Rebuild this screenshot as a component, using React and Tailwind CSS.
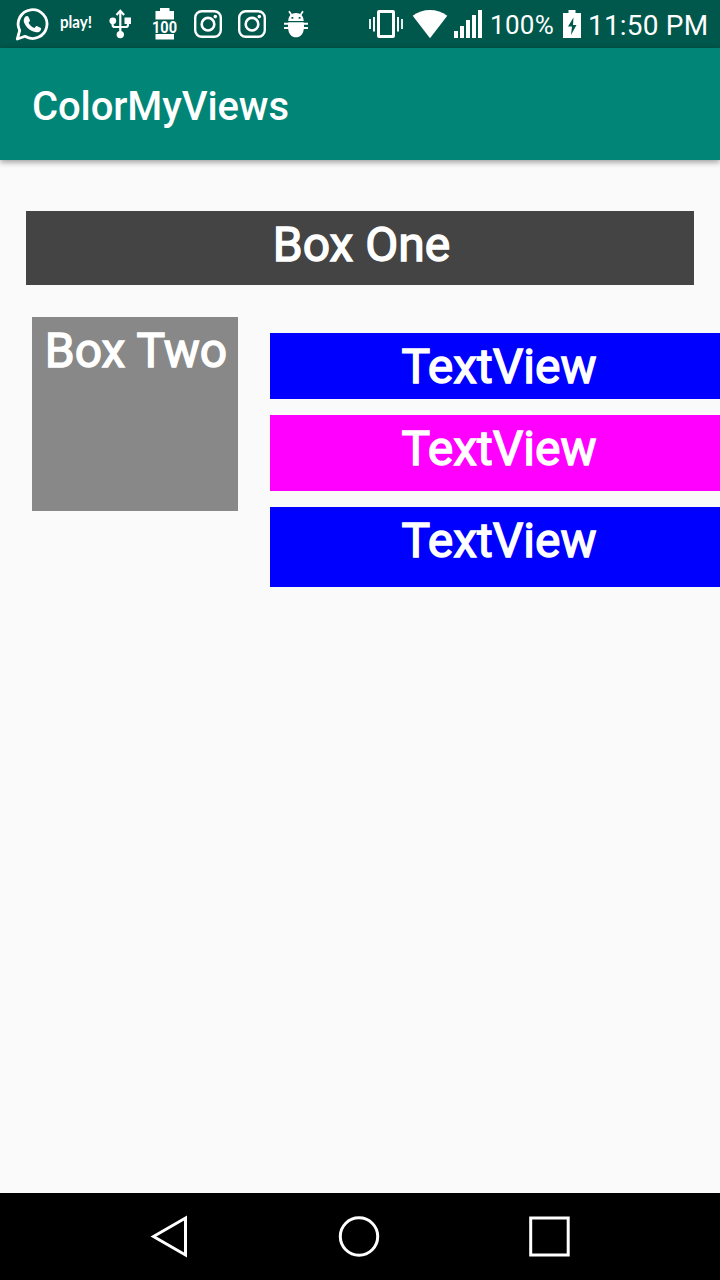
import React from "react";

function StatusIcon({ children, className = "w-8" }) {
  const width = { "w-8": 32, "w-9": 36, "w-7": 28, "w-[18px]": 18 }[className];
  return (
    <svg className={`h-12 shrink-0 overflow-visible ${className}`} viewBox={`0 0 ${width} 48`} fill="none">
      {children}
    </svg>
  );
}

function WhatsApp() {
  return (
    <StatusIcon>
      <path
        d="M1.800 39.500L4.200 31A14.400 14.400 0 1 1 9.500 36.800Z"
        transform="translate(-0.500 -0.500)"
        stroke="#fff"
        strokeWidth="2.800"
        strokeLinejoin="round"
      />
      <path
        d="M9.500 16.500c1-.9 2.400-.8 2.900.2l1.500 3.300c.2.600 0 1.100-.5 1.700l-.9 1.100c1.400 2.600 3.300 4.200 6 5.300l1.300-1.600c.4-.5.900-.6 1.500-.3l3.100 1.500c.7.400.8.800.6 1.700-.5 2-2.800 3.100-4.700 2.900-5.900-.8-10.800-5.200-12.400-10.200-.5-2.200.2-4.400 1.600-5.600z"
        fill="#fff"
      />
    </StatusIcon>
  );
}

function Play() {
  return (
    <StatusIcon>
      <text
        x="0"
        y="28"
        textLength="32"
        lengthAdjust="spacingAndGlyphs"
        fill="#fff"
        className="font-['Lato',sans-serif] text-[17px] leading-[24px] font-bold"
      >
        play!
      </text>
    </StatusIcon>
  );
}

function Usb() {
  return (
    <StatusIcon>
      <path d="M16.300 12v21M8.600 21v3.700q0 2.300 2.300 2.300h10.800q2.300 0 2.300-2.300V22" stroke="#fff" strokeWidth="2.200" />
      <path d="M12.500 15l3.800-4.200 3.800 4.200" stroke="#fff" strokeWidth="2.200" />
      <circle cx="8.800" cy="20.800" r="3.400" fill="#fff" />
      <rect x="20.500" y="17.500" width="6.500" height="6.500" fill="#fff" />
      <circle cx="16.300" cy="34.600" r="3.700" fill="#fff" />
    </StatusIcon>
  );
}

function BatteryLevel() {
  return (
    <StatusIcon>
      <path d="M12 8h9.500v3H26v8.500H7.500V11H12zM7.500 34H26v5.500H7.500z" fill="#fff" />
      <text
        x="4"
        y="32.500"
        textLength="25"
        lengthAdjust="spacingAndGlyphs"
        fill="#fff"
        stroke="#00574b"
        strokeWidth="1.500"
        paintOrder="stroke"
        className="font-['Roboto',sans-serif] text-[17px] font-bold"
      >
        100
      </text>
    </StatusIcon>
  );
}

function Instagram() {
  return (
    <StatusIcon>
      <rect x="3.200" y="11.200" width="25.600" height="25.600" rx="6.500" stroke="#fff" strokeWidth="2.400" />
      <circle cx="16" cy="24.200" r="6.300" stroke="#fff" strokeWidth="2.600" />
      <circle cx="23.300" cy="16.600" r="1.800" fill="#fff" />
    </StatusIcon>
  );
}

function Bug() {
  return (
    <StatusIcon>
      <path d="M9 11.300l2.500 3.700M23 11.300l-2.500 3.700" stroke="#fff" strokeWidth="1.700" />
      <path
        d="M8.300 21c0-5.300 3.200-8 7.700-8s7.700 2.700 7.700 8zM11.500 17v1.800h1.800v-1.800zM18.700 17v1.800h1.800v-1.800z"
        fill="#fff"
        fillRule="evenodd"
      />
      <path
        d="M4 22.800h4.300v-.5h15.400v.5H28v2h-4V27h4v2h-4.200C23.300 34 20.500 37.300 16 37.300S8.700 34 8.200 29H4v-2h4v-2.200H4z"
        fill="#fff"
      />
    </StatusIcon>
  );
}

function Vibrate() {
  return (
    <StatusIcon className="w-9">
      <rect x="10.500" y="11.500" width="15" height="25" rx="0.500" stroke="#fff" strokeWidth="3" />
      <path d="M2 19v10M34 19v10" stroke="#fff" strokeWidth="1.800" />
      <path d="M6 17v14.500M30 17v14.500" stroke="#fff" strokeWidth="2" />
    </StatusIcon>
  );
}

function Wifi() {
  return (
    <StatusIcon className="w-9">
      <path d="M.7 15.800Q8.500 10 18 10t17.300 5.800L18 38.200z" fill="#fff" />
    </StatusIcon>
  );
}

function Signal() {
  return (
    <StatusIcon className="w-7">
      <path d="M0 31h4v7H0zM6 26h4v12H6zM12 20h4v18h-4zM18 15h4v23h-4zM24 10h4v28h-4z" fill="#fff" />
    </StatusIcon>
  );
}

function Charging() {
  return (
    <StatusIcon className="w-[18px]">
      <path d="M5.500 10h7v3H18v25H0V13h5.500z" fill="#fff" />
      <path d="M10.500 17.500L5 26.500h4L8 35l5.500-10H10z" fill="#00574b" />
    </StatusIcon>
  );
}

function TextBox({ children, className }) {
  return (
    <div
      className={`flex justify-center pt-[5px] text-[48px] leading-[58px] text-white [-webkit-text-stroke:1.400px_white] ${className}`}
    >
      <span className="whitespace-nowrap">{children}</span>
    </div>
  );
}

export default function App() {
  return (
    <div className="flex h-[1280px] w-[720px] flex-col overflow-hidden bg-[#fafafa] font-['Roboto',sans-serif]">
      <div className="flex h-12 shrink-0 items-center justify-between bg-[#00574b] pr-3 pl-4 text-white">
        <div className="flex gap-3">
          <WhatsApp />
          <Play />
          <Usb />
          <BatteryLevel />
          <Instagram />
          <Instagram />
          <Bug />
        </div>
        <div className="flex w-[340px] items-center">
          <Vibrate />
          <div className="ml-2 flex shrink-0">
            <Wifi />
          </div>
          <div className="ml-1.5 flex shrink-0">
            <Signal />
          </div>
          <span className="ml-2 w-[73px] shrink-0 pt-0.5 text-[26px] leading-8 tracking-[0.3px]">100%</span>
          <Charging />
          <span className="ml-[7px] shrink-0 pt-[3px] text-[28px] leading-8 tracking-[0.2px] whitespace-nowrap">11:50 PM</span>
        </div>
      </div>

      <header className="z-10 flex h-28 shrink-0 items-center bg-[#008577] pt-1.5 pl-8 shadow-[0_2px_6px_rgba(0,0,0,0.4)]">
        <h1 className="text-[40px] leading-[48px] font-medium tracking-[-0.1px] text-white">ColorMyViews</h1>
      </header>

      <main className="flex grow flex-col pt-[51px]">
        <TextBox className="mx-[26px] h-[74px] bg-[#444444] pl-[3px]">Box One</TextBox>
        <div className="mt-8 flex gap-8 pl-8">
          <TextBox className="h-[194px] w-[206px] bg-[#888888] pl-0.5">Box Two</TextBox>
          <div className="flex grow flex-col gap-4 pt-4">
            <TextBox className="h-[66px] bg-[#0000ff] pl-2">TextView</TextBox>
            <TextBox className="h-[76px] bg-[#ff00ff] pl-2">TextView</TextBox>
            <TextBox className="h-20 bg-[#0000ff] pl-2">TextView</TextBox>
          </div>
        </div>
      </main>

      <nav className="flex h-[87px] shrink-0 items-center bg-black pl-[150px]">
        <svg className="h-11 w-10" viewBox="0 0 40 44" fill="none" stroke="#fff" strokeWidth="3">
          <path d="M3.500 21.500L35.500 3v37z" />
        </svg>
        <svg className="ml-[147px] h-11 w-11" viewBox="0 0 44 44" fill="none" stroke="#fff" strokeWidth="3">
          <circle cx="22" cy="21.500" r="18.700" />
        </svg>
        <svg className="ml-[147px] h-11 w-11" viewBox="0 0 44 44" fill="none" stroke="#fff" strokeWidth="3">
          <rect x="2.700" y="3" width="37.500" height="37" />
        </svg>
      </nav>
    </div>
  );
}
